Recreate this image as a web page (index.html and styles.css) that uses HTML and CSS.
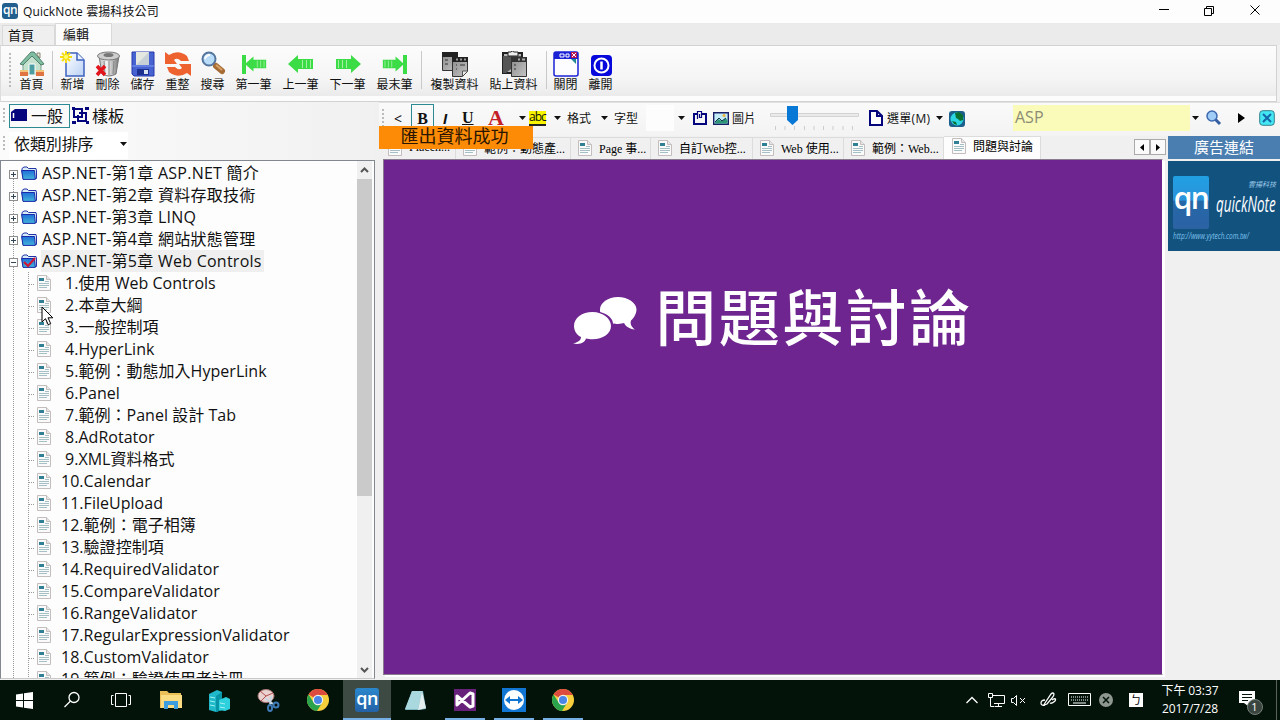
FILE: index.html
```html
<!DOCTYPE html>
<html lang="zh-Hant">
<head>
<meta charset="utf-8">
<title>QuickNote 雲揚科技公司</title>
<link rel="stylesheet" href="styles.css">
</head>
<body>
<svg class="defs" width="0" height="0">
  <defs>
    <linearGradient id="gFolder" x1="0" y1="0" x2="0" y2="1"><stop offset="0" stop-color="#1f6fd8"/><stop offset="1" stop-color="#45b4d8"/></linearGradient>
    <linearGradient id="gPaper" x1="0" y1="0" x2="1" y2="1"><stop offset="0" stop-color="#fff"/><stop offset="1" stop-color="#b9d0f5"/></linearGradient>
    <linearGradient id="gCan" x1="0" y1="0" x2="1" y2="0"><stop offset="0" stop-color="#bbb"/><stop offset=".4" stop-color="#f4f4f4"/><stop offset="1" stop-color="#777"/></linearGradient>
    <linearGradient id="gGray" x1="0" y1="0" x2="1" y2="1"><stop offset="0" stop-color="#8a8a8a"/><stop offset="1" stop-color="#c4c4c4"/></linearGradient>
    <symbol id="doc" viewBox="0 0 14 16"><path d="M.5.5h9l4 4v11H.5z" fill="#fafafa" stroke="#c4bdbd"/><path d="M9.5.5v4h4" fill="#e6e6e6" stroke="#c4bdbd"/><path d="M2 3h5v3H2z" fill="#2f8095"/><path d="M8 6.500h4M2 8.500h10M2 10.500h10M2 12.500h8" stroke="#a5c0c4"/></symbol>
    <symbol id="folder" viewBox="0 0 16 14"><path d="M1 4V2.500L3 1h3l1.500 1.500H15L15.500 5v7.500H2z" fill="#d7ebf7" stroke="#2434a8"/><path d="M.6 4.500h12.900l.8 8.900H2z" fill="url(#gFolder)" stroke="#1a2aa8"/></symbol>
    <symbol id="chrome" viewBox="0 0 22 22"><circle cx="11" cy="11" r="11" fill="#f7cf3c"/><path d="M11 11 1.500 5.500A11 11 0 0 1 20.500 5.500L20.800 6H11z" fill="#dd4b3e"/><path d="M1.500 5.500A11 11 0 0 0 10 22l5.300-8.500L11 11 6.700 13.500z" fill="#2ba24c"/><circle cx="11" cy="11" r="5.200" fill="#f2f2f2"/><circle cx="11" cy="11" r="4" fill="#4a86e8"/></symbol>
    <symbol id="arrow" viewBox="0 0 26 20"><path d="M0 10 10 1v4h15v10H10v4z" fill="#3bdc45"/><path d="M14.500 6v8M18.500 6v8M22.500 6v8" stroke="#a5f0a5"/></symbol>
  </defs>
</svg>
<div class="screen">
  <header class="titlebar">
    <span class="qn qn-small">qn</span>
    <span class="title">QuickNote 雲揚科技公司</span>
    <svg class="winctl" width="100" height="12" viewBox="0 0 100 12" fill="none" stroke="#000"><path d="M0 5.500h10M45.500 4.500h7v7h-7zM47.500 4.500v-2h7v7h-2"/><path d="m91.500 1.500 9 9m0-9-9 9"/></svg>
  </header>
  <nav class="ribbon-tabs"><span class="rtab">首頁</span><span class="rtab on">編輯</span></nav>
  <div class="ribbon">
    <div class="grip"></div>
    <div class="tool w35"><svg width="26" height="26" viewBox="0 0 26 26"><path d="M4 12v11h18V12l-9-9z" fill="#c4e2cd" stroke="#7aa38c"/><path d="M1 13 12 1h3l10 12-3 1-9-9-9 9z" fill="#7ebda0" stroke="#557f70"/><path d="M18 2h3v5l-3-3z" fill="#e5e2d0" stroke="#8a8a7a"/><path d="M10 13h6v11h-6z" fill="#4d9ea2" stroke="#fff"/><path d="M1 20h8v5H1zM17 20h8v5h-8z" fill="#df7442"/><path d="M1 20h8M17 20h8" stroke="#f3c27b" stroke-width="2"/></svg>首頁</div>
    <div class="sep s6"></div>
    <div class="tool w35"><svg width="26" height="26" viewBox="0 0 26 26"><path d="M6 2h11l7 7v16H6z" fill="url(#gPaper)" stroke="#3e62c0" stroke-width="1.500"/><path d="M17 2v7h7" fill="#eaf2ff" stroke="#3e62c0" stroke-width="1.500"/><path d="M6 0v12M0 6h12M2 2l8 8M10 2l-8 8" stroke="#f4dc10" stroke-width="2"/><circle cx="6" cy="6" r="2" fill="#ffff70"/></svg>新增</div>
    <div class="tool w35"><svg width="26" height="26" viewBox="0 0 26 26"><path d="M4 5l3 18q7 4 14 0l3-18z" fill="url(#gCan)" stroke="#777"/><path d="M9 10l1 13M14 10v14M19 10l-1 13" stroke="#888"/><ellipse cx="13.500" cy="5" rx="11" ry="4" fill="#cfcfcf" stroke="#777"/><ellipse cx="13.500" cy="4" rx="5" ry="2" fill="#777"/><path d="m2 15 8 9m0-9-8 9" stroke="#e1141c" stroke-width="3.500"/></svg>刪除</div>
    <div class="tool w35"><svg width="26" height="26" viewBox="0 0 26 26"><path d="M2 1h22v24H4l-2-2z" fill="#4763d2" stroke="#2738a8"/><path d="M6 1h13v13H6z" fill="#e4e8e0"/><path d="M6 14 19 1v13z" fill="#c8d2d6"/><path d="M7 18h12v6H7z" fill="#1d3290"/><path d="M14 19h4v4h-4z" fill="#d8e4f2"/><path d="M2 15h22" stroke="#7f9af0"/></svg>儲存</div>
    <div class="tool w35"><svg width="26" height="26" viewBox="0 0 26 26" fill="#ee622f"><path d="M0 1l4 3q9-6 18 1l2 5H16q-4-4-7-1l3 4H0z"/><path d="M26 25l-4-3q-9 6-18-1l-2-5h8q4 4 7 1l-3-4h12z"/></svg>重整</div>
    <div class="tool w35"><svg width="26" height="26" viewBox="0 0 26 26"><path d="m16 15 6 5" stroke="#a76c35" stroke-width="6" stroke-linecap="round"/><path d="m16 14 6 5" stroke="#d8a264" stroke-width="2"/><circle cx="9" cy="8" r="6.500" fill="#b9dcf8" stroke="#55759d" stroke-width="2"/><path d="M5 8q1-4 5-4" stroke="#fff" stroke-width="2" fill="none"/></svg>搜尋</div>
    <div class="tool w47"><svg width="26" height="26" viewBox="0 0 26 26"><path d="M1 4h4v19H1z" fill="#3bdc45"/><use href="#arrow" x="4" y="4" width="22" height="18"/></svg>第一筆</div>
    <div class="tool w47"><svg width="26" height="26" viewBox="0 0 26 26"><use href="#arrow" y="3" width="26" height="20"/></svg>上一筆</div>
    <div class="tool w47"><svg class="flip" width="26" height="26" viewBox="0 0 26 26"><use href="#arrow" y="3" width="26" height="20"/></svg>下一筆</div>
    <div class="tool w47"><svg class="flip" width="26" height="26" viewBox="0 0 26 26"><path d="M1 4h4v19H1z" fill="#3bdc45"/><use href="#arrow" x="4" y="4" width="22" height="18"/></svg>最末筆</div>
    <div class="sep s7"></div>
    <div class="tool w59"><svg width="26" height="26" viewBox="0 0 26 26"><path d="M.5 1.500h15v18H.5z" fill="url(#gGray)" stroke="#333"/><path d="M0 1h16v5H0z" fill="#222"/><path d="M3 9h3M3 13h3" stroke="#333"/><path d="M10.500 6.500h15v14l-5 5h-10z" fill="url(#gGray)" stroke="#333"/><path d="M10 6h16v5H10z" fill="#222"/><path d="M14 8.500h2M18 8.500h2M22 8.500h2" stroke="#999" stroke-width="2"/><path d="M14 14h1M14 18h1M18 14h5" stroke="#333"/><path d="M20.500 25v-5h5" fill="#eee" stroke="#555"/></svg>複製資料</div>
    <div class="tool w59"><svg width="26" height="26" viewBox="0 0 26 26"><path d="M2 2h19v20H2z" fill="#b8b8b8" stroke="#222" stroke-width="2"/><path d="M2 5h18v4l-10 9-5 4H2z" fill="#555"/><path d="M7 1h3q1-2 3 0h4v4H7z" fill="#eee" stroke="#222"/><path d="M10.500 6.500h15v19h-15z" fill="url(#gGray)" stroke="#333"/><path d="M10 6h16v5H10z" fill="#333"/><path d="M17 8.500h2M21 8.500h3" stroke="#aaa" stroke-width="2"/><path d="M13 14h2M13 18h2" stroke="#333"/></svg>貼上資料</div>
    <div class="sep s5"></div>
    <div class="tool w35"><svg width="26" height="26" viewBox="0 0 26 26"><rect x="1" y="1" width="24" height="24" rx="2" fill="#fdfdff" stroke="#1a22d6" stroke-width="1.500"/><path d="M1 1h24v7H1z" fill="#1a22d6"/><path d="M7 3h4v3H7zM13 3h3v3h-3z" fill="none" stroke="#fff"/><path d="M18 1h6v6h-6z" fill="#b71855"/><path d="m19 2 4 4m0-4-4 4" stroke="#fff"/><path d="M18 8h5v5z" fill="#218a91"/></svg>關閉</div>
    <div class="tool w35"><svg width="26" height="26" viewBox="0 0 26 26"><rect x="3" y="4" width="21" height="21" rx="4" fill="#0709dc"/><circle cx="13.500" cy="14.500" r="7" fill="none" stroke="#fff" stroke-width="2"/><path d="M13.500 10.500v8" stroke="#fff" stroke-width="2.500"/></svg>離開</div>
  </div>
  <main class="main">
    <section class="left">
      <div class="modes">
        <div class="grip"></div>
        <span class="mode on"><svg width="17" height="14" viewBox="0 0 17 14"><path d="m4 1-4 3v9h16V1z" fill="#05057d"/><path d="M2.500 5v5" stroke="#fff" stroke-width="1.500"/></svg>一般</span>
        <span class="mode"><svg width="17" height="17" viewBox="0 0 17 17" fill="none" stroke="#05057d" stroke-width="2"><path d="M2 2h8v8H2zM7 6h7v8H6V8"/><path d="M0 1.500h3M0 15.500h4M13 1.500h4M14 15.500h3" stroke-width="3"/></svg>樣板</span>
      </div>
      <div class="sort"><div class="grip"></div><div class="combo">依類別排序<i class="dd"></i></div></div>
      <div class="tree">
        <div class="rows">
          <div class="r1"><b class="ex plus"></b><svg class="fo"><use href="#folder"/></svg><span class="t">ASP.NET-第1章 ASP.NET 簡介</span></div>
          <div class="r1"><b class="ex plus"></b><svg class="fo"><use href="#folder"/></svg><span class="t">ASP.NET-第2章 資料存取技術</span></div>
          <div class="r1"><b class="ex plus"></b><svg class="fo"><use href="#folder"/></svg><span class="t">ASP.NET-第3章 LINQ</span></div>
          <div class="r1"><b class="ex plus"></b><svg class="fo"><use href="#folder"/></svg><span class="t">ASP.NET-第4章 網站狀態管理</span></div>
          <div class="r1"><b class="ex"></b><svg class="fo" viewBox="0 0 16 14"><use href="#folder"/><path d="m3 8 4 4 7-8" fill="none" stroke="#d31434" stroke-width="2.200"/></svg><span class="t sel">ASP.NET-第5章 Web Controls</span></div>
          <div class="kids">
            <div class="r2 n1"><svg class="dc"><use href="#doc"/></svg><span class="t">1.使用 Web Controls</span></div>
            <div class="r2 n1"><svg class="dc"><use href="#doc"/></svg><span class="t">2.本章大綱</span></div>
            <div class="r2 n1"><svg class="dc"><use href="#doc"/></svg><span class="t">3.一般控制項</span></div>
            <div class="r2 n1"><svg class="dc"><use href="#doc"/></svg><span class="t">4.HyperLink</span></div>
            <div class="r2 n1"><svg class="dc"><use href="#doc"/></svg><span class="t">5.範例：動態加入HyperLink</span></div>
            <div class="r2 n1"><svg class="dc"><use href="#doc"/></svg><span class="t">6.Panel</span></div>
            <div class="r2 n1"><svg class="dc"><use href="#doc"/></svg><span class="t">7.範例：Panel 設計 Tab</span></div>
            <div class="r2 n1"><svg class="dc"><use href="#doc"/></svg><span class="t">8.AdRotator</span></div>
            <div class="r2 n1"><svg class="dc"><use href="#doc"/></svg><span class="t">9.XML資料格式</span></div>
            <div class="r2"><svg class="dc"><use href="#doc"/></svg><span class="t">10.Calendar</span></div>
            <div class="r2"><svg class="dc"><use href="#doc"/></svg><span class="t">11.FileUpload</span></div>
            <div class="r2"><svg class="dc"><use href="#doc"/></svg><span class="t">12.範例：電子相簿</span></div>
            <div class="r2"><svg class="dc"><use href="#doc"/></svg><span class="t">13.驗證控制項</span></div>
            <div class="r2"><svg class="dc"><use href="#doc"/></svg><span class="t">14.RequiredValidator</span></div>
            <div class="r2"><svg class="dc"><use href="#doc"/></svg><span class="t">15.CompareValidator</span></div>
            <div class="r2"><svg class="dc"><use href="#doc"/></svg><span class="t">16.RangeValidator</span></div>
            <div class="r2"><svg class="dc"><use href="#doc"/></svg><span class="t">17.RegularExpressionValidator</span></div>
            <div class="r2"><svg class="dc"><use href="#doc"/></svg><span class="t">18.CustomValidator</span></div>
            <div class="r2"><svg class="dc"><use href="#doc"/></svg><span class="t">19.範例：驗證使用者註冊</span></div>
          </div>
        </div>
        <div class="scroll">
          <svg width="15" height="17" viewBox="0 0 15 17" fill="none" stroke="#555" stroke-width="2"><path d="m4 11 3.500-3.500L11 11"/></svg>
          <div class="thumb"></div>
          <svg width="15" height="17" viewBox="0 0 15 17" fill="none" stroke="#555" stroke-width="2"><path d="m4 7 3.500 3.500L11 7"/></svg>
        </div>
        <svg class="cursor" width="13" height="20" viewBox="0 0 13 20"><path d="M1 1v15l3.500-3.300 2.700 6 2.500-1.100L7 11.800h4.800z" fill="#fff" stroke="#000"/></svg>
      </div>
    </section>
    <section class="right">
      <div class="format">
        <div class="grip"></div>
        <span class="lt">&lt;</span>
        <span class="bbox">B</span>
        <span class="it">I</span>
        <span class="un">U</span>
        <span class="fa">A</span>
        <i class="dd"></i>
        <span class="abc">abc</span>
        <i class="dd"></i>
        <span>格式</span>
        <i class="dd"></i>
        <span>字型</span>
        <span class="white"></span>
        <i class="dd"></i>
        <svg width="14" height="16" viewBox="0 0 14 16" fill="none" stroke="#05057d" stroke-width="2"><path d="M4 4H1v10h12V4H8"/><path d="M4.500 9V1.500h4v6h-2V4" stroke-width="1.200"/></svg>
        <svg width="16" height="13" viewBox="0 0 16 13"><path d="M.7.7h14.600v11.600H.7z" fill="#c3ecf8" stroke="#171f66" stroke-width="1.400"/><path d="m1.500 11 4-4 3 2 4-3 2 2v3.500h-13z" fill="#2c9878"/><path d="m2 10 4-4 3 3 4-3" fill="none" stroke="#1b3450"/><circle cx="11" cy="3.500" r="1.500" fill="#ecb337"/></svg>
        <span>圖片</span>
        <svg width="92" height="30" viewBox="0 0 92 30"><path d="M.5 10.500h88v3H.5z" fill="#eaeaea" stroke="#d3d3d3"/><path d="M5.500 23v4M15 23v4M24.500 23v4M34.500 23v4M44 23v4M53.500 23v4M63 23v4M73 23v4M82.500 23v4" stroke="#cdcdcd"/><path d="M17 3h11v14l-5.500 5L17 17z" fill="#0878d7"/></svg>
        <svg width="14" height="16" viewBox="0 0 14 16"><path d="M1 1h7l5 5v9H1zM8 1v5h5" fill="#fff" stroke="#05057d" stroke-width="2"/></svg>
        <span class="menu">選單(M)</span>
        <i class="dd"></i>
        <svg class="globe" width="16" height="16" viewBox="0 0 16 16"><rect width="16" height="16" rx="3" fill="#1d5f8b"/><circle cx="8" cy="8" r="6.500" fill="#2bd5e2"/><path d="M6 2l4-1 4 3v5l-3 1-2-2-2-1zM3 10l4 1 1 3-3-1z" fill="#0d7033"/></svg>
        <span class="query">ASP</span>
        <i class="dd"></i>
        <svg width="16" height="16" viewBox="0 0 16 16"><path d="m9 9 5 5" stroke="#355da2" stroke-width="3"/><circle cx="6" cy="6" r="5" fill="#9fcdf5" stroke="#3d68b0" stroke-width="1.500"/></svg>
        <svg width="7" height="10" viewBox="0 0 7 10"><path d="M0 0v10l7-5z"/></svg>
        <svg width="16" height="16" viewBox="0 0 16 16"><rect x=".7" y=".7" width="14.600" height="14.600" rx="3" fill="#43e7f3" stroke="#34808c"/><path d="m4 4 8 8m0-8-8 8" stroke="#1565a8" stroke-width="2"/></svg>
      </div>
      <div class="work">
        <div class="docs">
          <div class="tabs">
            <span class="tab"><svg class="dc"><use href="#doc"/></svg>Placeh...</span>
            <span class="tab"><svg class="dc"><use href="#doc"/></svg>範例：動態產...</span>
            <span class="tab"><svg class="dc"><use href="#doc"/></svg>Page 事...</span>
            <span class="tab"><svg class="dc"><use href="#doc"/></svg>自訂Web控...</span>
            <span class="tab"><svg class="dc"><use href="#doc"/></svg>Web 使用...</span>
            <span class="tab"><svg class="dc"><use href="#doc"/></svg>範例：Web...</span>
            <span class="tab cur"><svg class="dc"><use href="#doc"/></svg>問題與討論</span>
            <span class="nav"><svg width="4" height="7"><path d="M4 0v7L0 3.500z"/></svg></span><span class="nav"><svg width="4" height="7"><path d="M0 0v7l4-3.500z"/></svg></span>
          </div>
          <div class="slide">
            <svg width="64" height="50" viewBox="0 0 64 50" fill="#fff"><path d="M45 1C35 1 27 7 27 13.500c0 2 0 2 .3 2.500C35 18 40 23 40 27.500c3 .6 9 .6 11-.4 2 3.500 5 6 11 6.400-4-3-5-6-4-9 3-2.500 5.500-7 5.500-11C63.500 7 55 1 45 1z"/><path d="M19.500 16C9 16 1 22 1 30c0 5 3 9 7 11 0 3-2 5-8 6.500 8 1.500 12-1.500 13-5 2 .5 4 .8 6.500.8C30 43.300 38 37.500 38 30s-8-14-18.500-14z"/></svg>
            <h1>問題與討論</h1>
          </div>
        </div>
        <aside class="ads">
          <div class="adhead">廣告連結</div>
          <div class="ad">
            <div class="adrow"><span class="qn qn-big">qn</span><div class="brand"><small>雲揚科技</small><em>quickNote</em></div></div>
            <span class="url">http://www.yytech.com.tw/</span>
          </div>
        </aside>
      </div>
    </section>
    <div class="toast">匯出資料成功</div>
  </main>
  <footer class="taskbar">
    <div class="apps">
      <span><svg width="17" height="17" viewBox="0 0 17 17" fill="#fff"><path d="m0 2.500 7-1V8H0zM8 1.300 17 0v8H8zM0 9h7v6.500l-7-1zM8 9h9v8l-9-1.300z"/></svg></span>
      <span><svg width="18" height="18" viewBox="0 0 18 18" fill="none" stroke="#fff" stroke-width="1.300"><circle cx="11" cy="6.500" r="5"/><path d="m7.500 10-6 6"/></svg></span>
      <span><svg width="20" height="16" viewBox="0 0 20 16" fill="none" stroke="#fff"><path d="M4.500 1.500h11v13h-11zM2.500 3.500h-2v9h2M17.500 3.500h2v9h-2"/></svg></span>
      <span><svg width="22" height="20" viewBox="0 0 22 20"><path d="M0 1h7l2 2h12v15H0z" fill="#eabf58"/><path d="M1 5h21v13H1z" fill="#fbdc82"/><path d="M4 19v-8h14v8h-4v-4H8v4z" fill="#3c9ede"/></svg></span>
      <span><svg width="23" height="23" viewBox="0 0 23 23"><path d="m1 5 8-4 5 2v18l-6 2-7-2z" fill="#20b9c9"/><path d="m8 7 6-4v18l-6 2z" fill="#0795a7"/><path d="m11 11 7-3 4 2v10l-5 2-6-1z" fill="#2fd0dd"/><path d="M2 8l5 1M2 12l5 1M2 16l5 1M12 14l5 1M12 18l5 1" stroke="#a1f1f5"/></svg></span>
      <span><svg width="23" height="24" viewBox="0 0 23 24"><ellipse cx="9" cy="8" rx="8" ry="6.500" fill="#e9d3d0" stroke="#aa7774"/><path d="M9 8 3 3m6 5 7-3M9 8l-5 5" stroke="#b84b4d"/><path d="m8 10 8 6M14 8l-1 9" stroke="#c6d6e4" stroke-width="2"/><circle cx="19" cy="17" r="2.500" fill="none" stroke="#417bb6" stroke-width="2"/><ellipse cx="13" cy="20" rx="2" ry="3" fill="none" stroke="#417bb6" stroke-width="2"/></svg></span>
      <span><svg width="22" height="22"><use href="#chrome"/></svg></span>
      <span class="active"><span class="qn qn-task">qn</span></span>
      <span><svg width="23" height="22" viewBox="0 0 23 22"><path d="M8 2h11l3 18-7 1H1z" fill="#7eb7c2"/><path d="M8 2h10l-4 18H1z" fill="#a9d8df"/><path d="m18 2 4 17-8 2z" fill="#e4eeee"/></svg></span>
      <span class="run"><svg width="22" height="22" viewBox="0 0 22 22"><path d="M0 0h22v22H0z" fill="#68217a"/><path d="M3 7v9l13-12 3 1v12l-3 1L3 7z" fill="none" stroke="#fff" stroke-width="3" stroke-linejoin="round"/></svg></span>
      <span class="run"><svg width="24" height="24" viewBox="0 0 24 24"><path d="M0 0h24v24H0z" fill="#1175d4"/><circle cx="12" cy="12" r="10" fill="#fff"/><path d="m3 12 5-4v3h8V8l5 4-5 4v-3H8v3z" fill="#1175d4"/></svg></span>
      <span class="run"><svg width="22" height="22"><use href="#chrome"/></svg></span>
    </div>
    <div class="tray">
      <svg width="12" height="8" viewBox="0 0 12 8" fill="none" stroke="#fff" stroke-width="1.300"><path d="m.5 7 5.500-5.500L11.500 7"/></svg>
      <svg width="17" height="14" viewBox="0 0 17 14" fill="none" stroke="#fff"><path d="M4.500 2.500h12v8H6M10.500 10v3M7 13.500h7M.5.500h4v4h-4zM2.500 5v8.500h4"/></svg>
      <svg width="16" height="12" viewBox="0 0 16 12" fill="none" stroke="#fff"><path d="M.5 4.500h2l3-3v10l-3-3h-2zM9 4l5 5m0-5L9 9"/></svg>
      <svg width="17" height="16" viewBox="0 0 17 16" fill="none" stroke="#fff" stroke-width="1.300"><path d="M5 11 11 2q2-2 3 0 0 2-2 4l-5 6-3 1zM5 8q-4 0-4 3t4 2M12 8q5-3 3 1-3 3-5 2"/></svg>
      <svg width="24" height="14" viewBox="0 0 24 14" fill="none" stroke="#fff"><path d="M.5.500h22v12H.5z"/><path d="M3 4h17M3 7h17" stroke-dasharray="1 1"/><path d="M5 10h13"/></svg>
      <svg width="14" height="14" viewBox="0 0 14 14"><circle cx="7" cy="7" r="7" fill="#8f9791"/><path d="m4 4 6 6m0-6-6 6" stroke="#06150a" stroke-width="1.500"/></svg>
      <span class="ime">ㄅ</span>
      <div class="clock"><span>下午 03:37</span><span>2017/7/28</span></div>
      <div class="note"><svg width="16" height="16" viewBox="0 0 16 16"><path d="M0 0h16v12H9v3l-4-3H0z" fill="#fff"/><path d="M3 3.500h10M3 6.500h10M3 9.500h6" stroke="#06150a"/></svg><span class="badge">1</span></div>
      <div class="peek"></div>
    </div>
  </footer>
</div>
</body>
</html>
```

FILE: styles.css
```css
* { box-sizing: border-box; }
body { margin: 0; font-family: "Open Sans", "Noto Sans CJK TC", sans-serif; color: #111; }
svg { display: block; flex: none; }
.defs { position: absolute; }
.screen { width: 1280px; height: 720px; overflow: hidden; display: flex; flex-direction: column; background: #f0f0f0; white-space: nowrap; }

.titlebar { height: 23px; flex: none; background: #fdfdfd; display: flex; align-items: center; padding: 0 21px 1px 2px; font-size: 12px; }
.title { margin-left: 5px; letter-spacing: .1px; }
.winctl { margin-left: auto; overflow: visible; margin-top: -2px; }
.qn { display: flex; align-items: center; justify-content: center; color: #fff; font-weight: 600; flex: none; }
.qn-small { width: 16px; height: 16px; border-radius: 3px; background: #235f8e; font-size: 12px; padding-bottom: 3px; letter-spacing: -.5px; }

.ribbon-tabs { height: 22px; flex: none; display: flex; background: #ebebeb; font-size: 13px; align-items: flex-end; padding-left: 2px; }
.rtab { width: 53px; height: 20px; border: 1px solid #d9d9d9; border-bottom: 0; padding-left: 5px; line-height: 19px; background: #efefef; }
.rtab.on { width: 57px; height: 22px; background: #fcfcfc; padding-left: 7px; line-height: 20px; }

.ribbon { height: 57px; flex: none; display: flex; margin: 0 3px 0 0; border: 1px solid #d2d2d2; border-left-color: #ddd; background: linear-gradient(#fcfcfc, #f5f5f5 60%, #ebebeb 90%, #fcfcfc 91%); font-size: 12px; padding-top: 5px; }
.grip { width: 2px; background: repeating-linear-gradient(#bbb 0 2px, transparent 2px 4px); flex: none; }
.ribbon .grip { height: 36px; margin: 2px 3px 0 8px; }
.tool { display: flex; flex-direction: column; align-items: center; line-height: 16px; flex: none; }
.flip { transform: scaleX(-1); }
.w35 { width: 35px; } .w47 { width: 47px; } .w59 { width: 59px; }
.sep { height: 38px; flex: none; background: linear-gradient(#c9c9c9, #c9c9c9) 3px 0 / 1px 100% no-repeat; }
.s6 { width: 6px; } .s7 { width: 7px; } .s5 { width: 5px; }

.main { flex: 1; min-height: 0; display: flex; position: relative; }
.left { width: 375px; display: flex; flex-direction: column; flex: none; }
.modes { height: 28px; display: flex; padding: 2px 0 2px 3px; font-size: 16px; background: linear-gradient(90deg, #fbfbfb, #f1f1f1); flex: none; }
.modes .grip, .sort .grip { height: 16px; margin: 4px 4px 0 0; }
.mode { display: flex; align-items: center; gap: 3px; padding: 0 2px 2px 2px; height: 24px; }
.mode.on { border: 1px solid #2b8a94; width: 61px; padding: 0 0 2px 1px; }
.sort { height: 30px; display: flex; padding: 2px 0 0 3px; background: linear-gradient(90deg, #fbfbfb, #f1f1f1); flex: none; }
.combo { width: 119px; height: 27px; background: #fff; font-size: 16px; line-height: 21px; display: flex; align-items: center; justify-content: space-between; padding: 0 1px 3px 5px; letter-spacing: -.1px; }
.dd { width: 7px; height: 4px; background: #111; clip-path: polygon(0 0, 100% 0, 50% 100%); flex: none; }
.tree { flex: 1; min-height: 0; border: 1px solid #828790; border-bottom-color: #c8c8c8; background: #fdfdfd; display: flex; position: relative; overflow: hidden; margin-bottom: 1px; }
.rows { flex: 1; overflow: hidden; font-size: 16px; padding-top: 1px; background: repeating-linear-gradient(#999 0 1px, transparent 1px 2px) 12px 12px / 1px 100% no-repeat; }
.r1 { height: 22px; display: flex; align-items: center; padding-left: 8px; }
.ex { width: 9px; height: 9px; border: 1px solid #8e8e8e; margin: 2px 3px 0 0; background: linear-gradient(#345, #345) 1px 3px / 5px 1px no-repeat #fdfdfd; }
.ex.plus { background: linear-gradient(#345, #345) 1px 3px / 5px 1px no-repeat, linear-gradient(#345, #345) 3px 1px / 1px 5px no-repeat #fdfdfd; }
.fo { width: 16px; height: 14px; margin-right: 4px; }
.t { letter-spacing: .03px; line-height: 22px; height: 22px; }
.r1 .t { padding: 0 2px 0 1px; letter-spacing: .25px; }
.sel { background: #efefef; }
.kids { background: repeating-linear-gradient(#999 0 1px, transparent 1px 2px) 27px 0 / 1px 100% no-repeat; }
.r2 { height: 22px; display: flex; align-items: center; padding-left: 36px; background: repeating-linear-gradient(90deg, #999 0 1px, transparent 1px 2px) 28px 12px / 6px 1px no-repeat; }
.dc { width: 14px; height: 16px; margin-right: 10px; }
.r2.n1 .dc { margin-right: 14px; }
.scroll { width: 15px; margin-right: 2px; background: #f0f0f0; display: flex; flex-direction: column; }
.thumb { height: 317px; margin: 1px 0 auto; background: #cacaca; }
.cursor { position: absolute; left: 40px; top: 145px; }

.right { flex: 1; margin-left: 4px; display: flex; flex-direction: column; min-width: 0; }
.format { height: 34px; flex: none; display: grid; grid-template-columns: 12px 17px 31px 20px 26px 31px 10px 25px 13px 34px 13px 32px 32px 15px 20px 19px 38px 99px 18px 49px 13px 64px 179px 14px 32px 21px 16px; align-items: center; font-size: 12px; padding: 0 0 3px 3px; background: linear-gradient(#fafafa, #f3f3f3); border-top: 1px solid #e0e0e0; }
.format .grip { height: 18px; }
.lt { font-size: 14px; }
.bbox, .un, .fa { font-family: "Liberation Serif", serif; font-weight: bold; font-size: 16px; }
.bbox { width: 23px; height: 28px; border: 1px solid #2b8a94; text-align: center; line-height: 27px; }
.it { font: italic bold 15px "Liberation Sans", sans-serif; padding-left: 1px; }
.un { text-decoration: underline; }
.fa { font-size: 22px; color: #c41e28; line-height: 24px; }
.abc { width: 17px; background: #f8f400; line-height: 12px; border-bottom: 2px solid #222; height: 15px; letter-spacing: -1px; }
.menu { letter-spacing: .3px; }
.white { background: #fdfdfd; width: 28px; height: 26px; }
.query { width: 177px; height: 26px; background: #fafab9; color: #8c8c75; font-size: 16px; line-height: 24px; padding-left: 2px; }
.globe { margin-top: 2px; }

.work { flex: 1; display: flex; min-height: 0; }
.docs { width: 785px; flex: none; display: flex; flex-direction: column; padding: 0 0 5px 4px; }
.tabs { height: 23px; flex: none; display: flex; align-items: flex-end; font: 12px "Liberation Serif", "Noto Sans CJK TC", serif; color: #000; }
.tab { height: 22px; border: 1px solid #dcdcdc; border-width: 1px 1px 0 0; display: flex; align-items: center; padding: 0 0 2px 7px; flex: none; overflow: hidden; }
.tab .dc { margin-right: 7px; }
.tab:nth-child(1) { width: 73px; padding-left: 5px; } .tab:nth-child(2) { width: 115px; } .tab:nth-child(3) { width: 80px; }
.tab:nth-child(4) { width: 102px; } .tab:nth-child(5) { width: 91px; } .tab:nth-child(6) { width: 100px; }
.tab.cur { width: 97px; height: 23px; background: #fdfdfd; padding: 0 0 4px 8px; }
.nav { width: 16px; height: 16px; border: 1px solid #aaa; background: #fafafa; display: flex; align-items: center; justify-content: center; margin-bottom: 4px; }
.nav:last-child { margin-right: -2px; }
.cur + .nav { margin-left: auto; }
.slide { flex: 1; margin-right: 1px; border: 1px solid #8a7a92; border-right: 1px solid #fff; box-shadow: 2px 2px 0 #fff; background: #6e258f; display: flex; align-items: flex-start; justify-content: center; gap: 18px; padding: 136px 0 0 0; color: #fff; }
.slide h1 { margin: -17px 0 0; font-size: 61px; letter-spacing: 2.500px; font-weight: 500; line-height: 72px; font-family: "Noto Sans CJK TC", sans-serif; }
.ads { flex: 1; margin-left: 4px; min-width: 0; }
.adhead { height: 23px; background: #4a7eb1; color: #fff; font-size: 15px; text-align: center; line-height: 21px; padding-top: 1px; }
.ad { height: 90px; margin-top: 2px; background: #12527f; padding: 15px 0 0 5px; color: #fff; overflow: hidden; }
.adrow { display: flex; }
.qn-big { width: 36px; height: 53px; border-radius: 2px; background: linear-gradient(#21a0e4, #2a94da 45%, #2468a8 48%, #2c62a4); font-size: 30px; padding-bottom: 10px; letter-spacing: -1.500px; }
.brand { width: 69px; flex: none; display: flex; flex-direction: column; align-items: flex-start; padding: 4px 0 0 7px; }
.brand small { font-size: 7px; font-style: italic; color: #9cc9e8; line-height: 10px; margin-left: 32px; }
.brand em { width: 98px; font-size: 22px; line-height: 26px; transform: scaleX(.61); transform-origin: left; }
.url { font-size: 9px; font-style: italic; color: #7fc3ee; display: block; line-height: 12px; margin-top: 1px; transform: scaleX(.72); transform-origin: left; }
.toast { position: absolute; left: 379px; top: 24px; width: 154px; height: 23px; background: #fd8b05; font-size: 18px; line-height: 21px; text-align: center; padding-right: 3px; color: #2a1500; }

.taskbar { height: 40px; flex: none; background: #03130a; display: flex; justify-content: space-between; color: #fff; }
.apps { display: grid; grid-template-columns: 48px 48px 50px repeat(9, 49px); padding-right: 1px; }
.apps > span { display: flex; align-items: center; justify-content: center; }
.apps .active { background: #3c4a43; border-bottom: 2px solid #76aee6; padding-top: 2px; margin-left: 1px; }
.apps .run { background: linear-gradient(#76aee6, #76aee6) center bottom / 40px 2px no-repeat; }
.qn-task { width: 24px; height: 24px; border-radius: 3px; background: linear-gradient(#2b87cc, #2361a6); font-size: 18px; padding-bottom: 5px; letter-spacing: -.5px; }
.tray { display: grid; grid-template-columns: 20px 28px 18px 40px 24px 28px 32px 76px 40px 12px; align-items: center; justify-items: center; }
.ime { width: 14px; height: 14px; background: #fff; color: #000; font-size: 11px; line-height: 13px; text-align: center; }
.clock { display: flex; flex-direction: column; align-items: center; font-size: 12px; line-height: 18px; letter-spacing: -.1px; }
.note { position: relative; margin: -2px 0 0 -3px; }
.badge { position: absolute; left: 8px; top: 8px; width: 16px; height: 16px; border-radius: 50%; background: #3a453f; border: 1px solid #75807a; font-size: 11px; line-height: 13px; text-align: center; }
.peek { width: 1px; height: 40px; background: #59635d; margin-left: 5px; }
```
